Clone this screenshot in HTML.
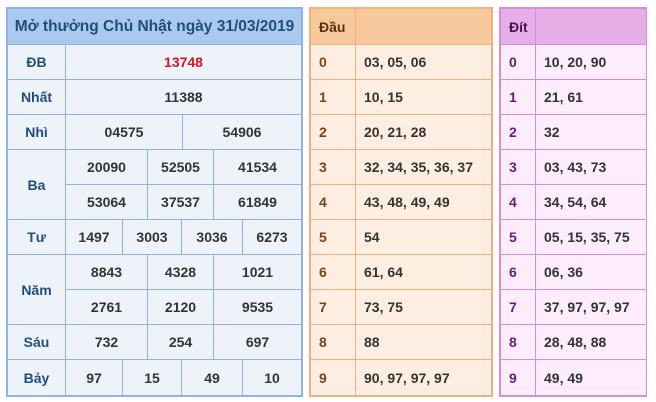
<!DOCTYPE html>
<html><head><meta charset="utf-8"><style>
body{margin:0;width:656px;height:402px;background:#fff;position:relative;overflow:hidden;font-family:"Liberation Sans",Arial,sans-serif;font-weight:bold;font-size:14px}
.t{position:absolute}
.c{position:absolute;display:flex;align-items:center;justify-content:center;box-sizing:border-box}
.l{justify-content:flex-start;padding-left:8px}
</style></head><body>
<div id="root"></div>
<script>
var H='';
function box(x,y,w,h,bg){H+='<div class="t" style="left:'+x+'px;top:'+y+'px;width:'+w+'px;height:'+h+'px;background:'+bg+'"></div>';}
function cell(x1,y1,x2,y2,bg,txt,col,cls,fs){H+='<div class="c '+(cls||'')+'" style="left:'+(x1+1)+'px;top:'+(y1+1)+'px;width:'+(x2-x1-1)+'px;height:'+(y2-y1-1)+'px;background:'+bg+';color:'+col+(fs?';font-size:'+fs+'px':'')+'">'+txt+'</div>';}
var C='#eef3fa',HB='#a9c9ef',LC='#1f4e7a',NC='#333';
box(6,7,297,390,'#8fb2e6');
cell(7,8,301,44,HB,'Mở thưởng Chủ Nhật ngày 31/03/2019',LC,'',15.5);
var R=[44,79,114,149,184,219,254,289,324,359,395];
function lab(i,j,t){cell(7,R[i],65,R[j],C,t,LC);}
lab(0,1,'ĐB');cell(65,44,301,79,C,'13748','#e0101e');
lab(1,2,'Nhất');cell(65,79,301,114,C,'11388',NC);
lab(2,3,'Nhì');cell(65,114,182,149,C,'04575',NC);cell(182,114,301,149,C,'54906',NC);
lab(3,5,'Ba');
[[ '20090','52505','41534'],['53064','37537','61849']].forEach(function(r,k){var y=R[3+k],y2=R[4+k];cell(65,y,147,y2,C,r[0],NC);cell(147,y,213,y2,C,r[1],NC);cell(213,y,301,y2,C,r[2],NC);});
lab(5,6,'Tư');
var t4=[65,122,181,242,301];['1497','3003','3036','6273'].forEach(function(v,k){cell(t4[k],R[5],t4[k+1],R[6],C,v,NC);});
lab(6,8,'Năm');
[['8843','4328','1021'],['2761','2120','9535'],['732','254','697']].forEach(function(r,k){var y=R[6+k],y2=R[7+k];cell(65,y,147,y2,C,r[0],NC);cell(147,y,213,y2,C,r[1],NC);cell(213,y,301,y2,C,r[2],NC);});
lab(8,9,'Sáu');
lab(9,10,'Bảy');
['97','15','49','10'].forEach(function(v,k){cell(t4[k],R[9],t4[k+1],R[10],C,v,NC);});
box(309,7,184,390,'#f0b07a');
cell(310,8,355,44,'#f8c89d','Đầu','#5a3010','l');cell(355,8,491,44,'#f8c89d','','#000');
var dau=['03, 05, 06','10, 15','20, 21, 28','32, 34, 35, 36, 37','43, 48, 49, 49','54','61, 64','73, 75','88','90, 97, 97, 97'];
dau.forEach(function(v,k){cell(310,R[k],355,R[k+1],'#fdeee1',k,'#7a4418','l');cell(355,R[k],491,R[k+1],'#fdeee1',v,'#333','l');});
box(499,7,148,390,'#d98ad8');
cell(500,8,535,44,'#e4aee6','Đít','#4a1050','l');cell(535,8,646,44,'#e4aee6','','#000');
var dit=['10, 20, 90','21, 61','32','03, 43, 73','34, 54, 64','05, 15, 35, 75','06, 36','37, 97, 97, 97','28, 48, 88','49, 49'];
dit.forEach(function(v,k){cell(500,R[k],535,R[k+1],'#fcecfc',k,'#6a1a7a','l');cell(535,R[k],646,R[k+1],'#fcecfc',v,'#333','l');});
document.getElementById('root').innerHTML=H;
</script>
</body></html>
